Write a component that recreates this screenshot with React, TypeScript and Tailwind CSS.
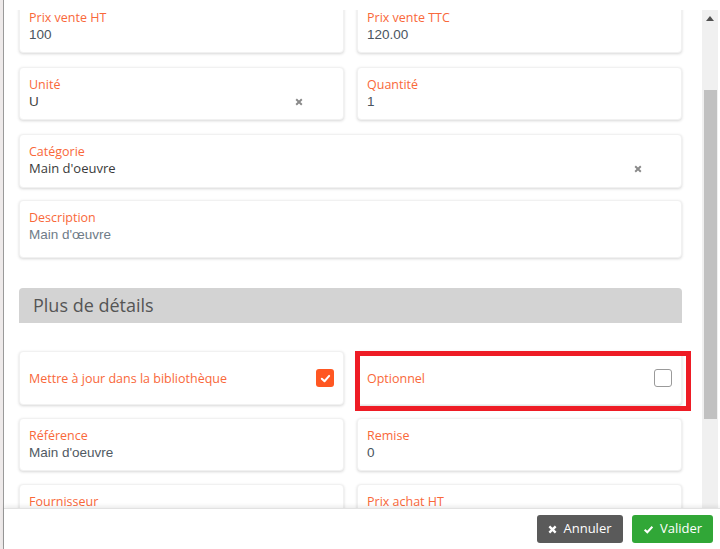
import React from "react";

const labelCls = "text-[12.5px] leading-[17px] text-[#f9683a] [font-family:'Open_Sans',sans-serif]";
const valueCls = "text-[13.5px] leading-[17px] [font-family:'Liberation_Sans',Arial,sans-serif]";
const cardCls = "bg-white rounded-[4px] border border-[#f1f1f1] shadow-[0_1px_3px_rgba(0,0,0,0.16)]";

function XIcon({ className = "" }: { className?: string }) {
  return (
    <svg viewBox="0 0 10 10" className={className} width="8" height="8">
      <path d="M1.5 1.5 L8.5 8.5 M8.5 1.5 L1.5 8.5" stroke="currentColor" strokeWidth="2.4" strokeLinecap="butt" />
    </svg>
  );
}

function Field({
  label,
  value,
  valueColor = "text-[#4a5560]",
  clear = false,
  extra = "pb-[9px]",
}: {
  label: string;
  value: string;
  valueColor?: string;
  clear?: boolean;
  extra?: string;
}) {
  return (
    <div className={`${cardCls} pl-[9px] pr-[9px] pt-[8px] ${extra}`}>
      <div className={labelCls}>{label}</div>
      <div className="flex items-center justify-between h-[17px]">
        <div className={`${valueCls} ${valueColor}`}>{value}</div>
        {clear && <XIcon className="text-[#8a8a8a] mr-[31px]" />}
      </div>
    </div>
  );
}

export default function App() {
  return (
    <div className="w-[720px] h-[549px] flex overflow-hidden bg-white">
      <div className="w-[4px] h-full bg-[#eeeaea] border-r border-[#9a9a9a]" />
      <div className="flex-1 flex flex-col h-full">
        <div className="h-[10px] bg-white" />
        <div className="flex-1 flex min-h-0">
          <div className="flex-1 overflow-hidden pl-[15px] pr-[20px]">
            <div className="-mt-[10px] flex flex-col">
              <div className="grid grid-cols-2 gap-x-[13px]">
                <Field label="Prix vente HT" value="100" />
                <Field label="Prix vente TTC" value="120.00" />
              </div>
              <div className="grid grid-cols-2 gap-x-[13px] mt-[14px]">
                <Field label="Unité" value="U" valueColor="text-[#444]" clear />
                <Field label="Quantité" value="1" />
              </div>
              <div className="mt-[14px]">
                <div className={`${cardCls} pl-[9px] pr-[9px] pt-[8px] pb-[10px]`}>
                  <div className={labelCls}>Catégorie</div>
                  <div className="flex items-center justify-between h-[17px]">
                    <div className="text-[13px] leading-[17px] text-[#3a3a3a] [font-family:'Open_Sans',sans-serif]">Main d'oeuvre</div>
                    <XIcon className="text-[#8a8a8a] mr-[30px]" />
                  </div>
                </div>
              </div>
              <div className="mt-[12px]">
                <Field label="Description" value="Main d'œuvre" valueColor="text-[#6f7c88]" extra="pb-[14px]" />
              </div>
              <div className="mt-[30px] h-[35px] bg-[#d3d3d3] rounded-t-[4px] flex items-center pl-[14px]">
                <span className="text-[18px] text-[#555] [font-family:'Open_Sans',sans-serif]">Plus de détails</span>
              </div>
              <div className="grid grid-cols-2 gap-x-[13px] mt-[28px]">
                <div className={`${cardCls} h-[54px] pl-[9px] pr-[9px] flex items-center justify-between`}>
                  <span className={labelCls}>Mettre à jour dans la bibliothèque</span>
                  <span className="w-[18px] h-[18px] rounded-[3px] bg-[#ff5722] flex items-center justify-center">
                    <svg viewBox="0 0 12 12" width="11" height="11">
                      <path d="M2 6.3 L4.9 9 L10 3.2" fill="none" stroke="white" strokeWidth="2.2" strokeLinecap="round" strokeLinejoin="round" />
                    </svg>
                  </span>
                </div>
                <div className="relative">
                  <div className={`${cardCls} h-[54px] pl-[9px] pr-[9px] flex items-center justify-between`}>
                    <span className={labelCls}>Optionnel</span>
                    <span className="w-[18px] h-[18px] rounded-[3px] bg-white border border-[#9a9a9a]" />
                  </div>
                  <div className="absolute left-[-2px] top-0 w-[336px] h-[60px] border-[5px] border-[#ee1c25] pointer-events-none" />
                </div>
              </div>
              <div className="grid grid-cols-2 gap-x-[13px] mt-[13px]">
                <Field label="Référence" value="Main d'oeuvre" valueColor="text-[#505a63]" />
                <Field label="Remise" value="0" />
              </div>
              <div className="grid grid-cols-2 gap-x-[13px] mt-[13px]">
                <Field label="Fournisseur" value="" />
                <Field label="Prix achat HT" value="" />
              </div>
            </div>
          </div>
          <div className="w-[16px] bg-[#f0f0f0] flex flex-col items-center">
            <svg viewBox="0 0 10 6" width="8" height="5" className="mt-[6px]">
              <path d="M0 6 L5 0 L10 6 Z" fill="#505050" />
            </svg>
            <div className="mt-[69px] w-[13px] h-[329px] bg-[#c1c1c1]" />
          </div>
          <div className="w-[2px] bg-white" />
        </div>
        <div className="h-[41px] bg-white border-t border-[#e2e2e2] shadow-[0_-2px_4px_rgba(0,0,0,0.08)] relative z-10 flex items-center justify-end pr-[7px] gap-[9px]">
          <button className="h-[28px] w-[86px] rounded-[3px] bg-[#5a5a5a] text-white text-[13px] flex items-center justify-center gap-[6px] [font-family:'Open_Sans',sans-serif]">
            <svg viewBox="0 0 10 10" width="9" height="9">
              <path d="M1.5 1.5 L8.5 8.5 M8.5 1.5 L1.5 8.5" stroke="white" strokeWidth="2.6" />
            </svg>
            Annuler
          </button>
          <button className="h-[28px] w-[81px] rounded-[3px] bg-[#31a737] text-white text-[13px] flex items-center justify-center gap-[6px] [font-family:'Open_Sans',sans-serif]">
            <svg viewBox="0 0 12 12" width="11" height="11">
              <path d="M1.8 6.3 L4.7 9 L10.2 3" fill="none" stroke="white" strokeWidth="2.2" />
            </svg>
            Valider
          </button>
        </div>
      </div>
    </div>
  );
}
